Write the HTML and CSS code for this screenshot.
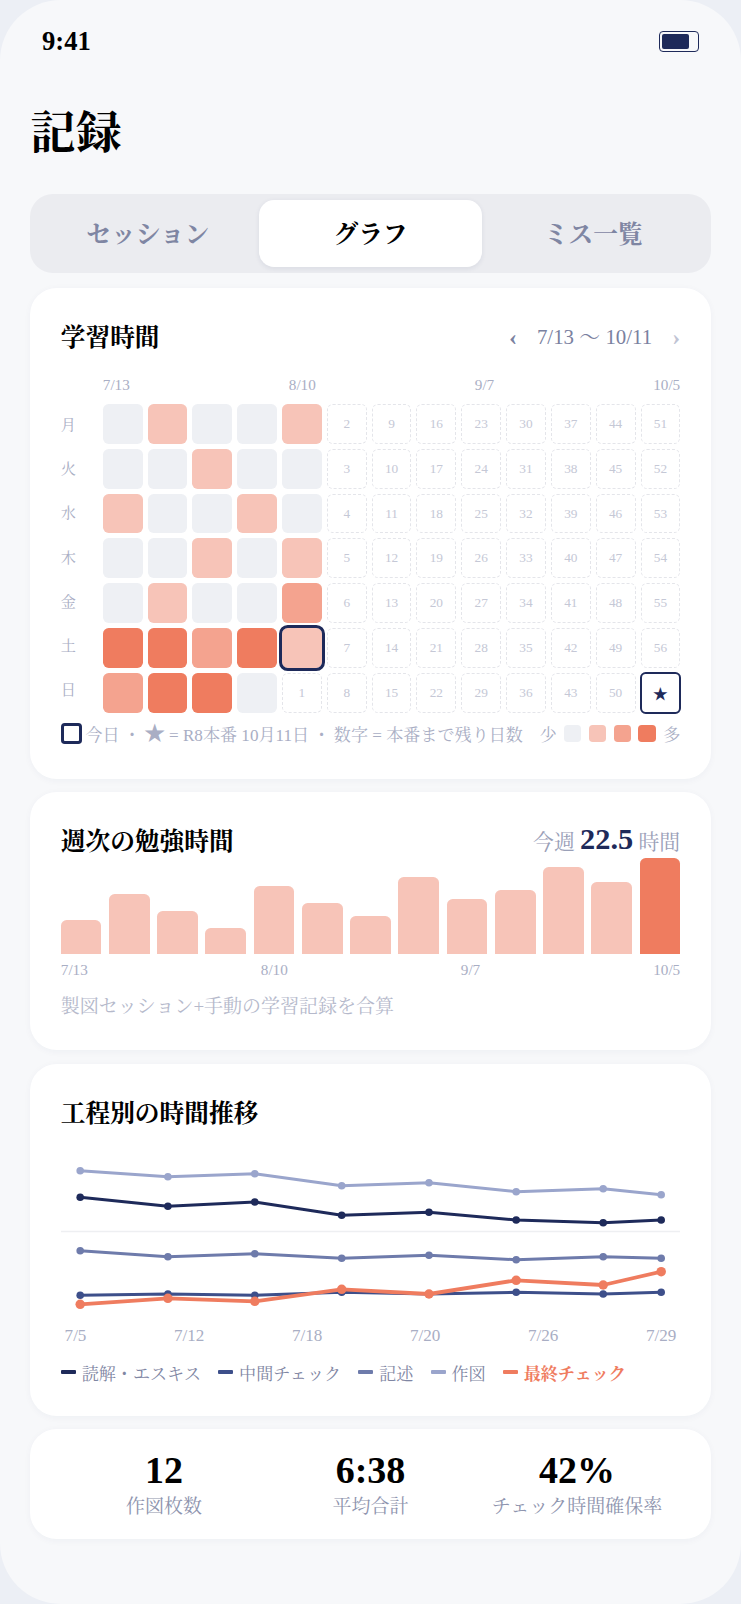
FILE: index.html
```html
<!DOCTYPE html>
<html lang="ja">
<head>
<meta charset="utf-8">
<title>記録</title>
<link rel="stylesheet" href="styles.css">
</head>
<body>
<div class="phone">
  <div class="status">
    <span class="time">9:41</span>
    <span class="battery"><span class="battery-fill"></span></span>
  </div>
  <h1 class="page-title">記録</h1>
  <div class="tabs">
    <div class="tab">セッション</div>
    <div class="tab active">グラフ</div>
    <div class="tab">ミス一覧</div>
  </div>

  <section class="card study">
    <div class="head">
      <h2>学習時間</h2>
      <div class="range"><span class="chev">‹</span><span class="range-text">7/13 〜 10/11</span><span class="chev dim">›</span></div>
    </div>
    <div class="months"><span>7/13</span><span>8/10</span><span>9/7</span><span>10/5</span></div>
    <div class="heat-wrap">
      <div class="days">
        <div class="day">月</div><div class="day">火</div><div class="day">水</div><div class="day">木</div><div class="day">金</div><div class="day">土</div><div class="day">日</div>
      </div>
      <div class="heat">
        <div class="c l0"></div><div class="c l1"></div><div class="c l0"></div><div class="c l0"></div><div class="c l1"></div><div class="c f">2</div><div class="c f">9</div><div class="c f">16</div><div class="c f">23</div><div class="c f">30</div><div class="c f">37</div><div class="c f">44</div><div class="c f">51</div>
        <div class="c l0"></div><div class="c l0"></div><div class="c l1"></div><div class="c l0"></div><div class="c l0"></div><div class="c f">3</div><div class="c f">10</div><div class="c f">17</div><div class="c f">24</div><div class="c f">31</div><div class="c f">38</div><div class="c f">45</div><div class="c f">52</div>
        <div class="c l1"></div><div class="c l0"></div><div class="c l0"></div><div class="c l1"></div><div class="c l0"></div><div class="c f">4</div><div class="c f">11</div><div class="c f">18</div><div class="c f">25</div><div class="c f">32</div><div class="c f">39</div><div class="c f">46</div><div class="c f">53</div>
        <div class="c l0"></div><div class="c l0"></div><div class="c l1"></div><div class="c l0"></div><div class="c l1"></div><div class="c f">5</div><div class="c f">12</div><div class="c f">19</div><div class="c f">26</div><div class="c f">33</div><div class="c f">40</div><div class="c f">47</div><div class="c f">54</div>
        <div class="c l0"></div><div class="c l1"></div><div class="c l0"></div><div class="c l0"></div><div class="c l2"></div><div class="c f">6</div><div class="c f">13</div><div class="c f">20</div><div class="c f">27</div><div class="c f">34</div><div class="c f">41</div><div class="c f">48</div><div class="c f">55</div>
        <div class="c l3"></div><div class="c l3"></div><div class="c l2"></div><div class="c l3"></div><div class="c l1 today"></div><div class="c f">7</div><div class="c f">14</div><div class="c f">21</div><div class="c f">28</div><div class="c f">35</div><div class="c f">42</div><div class="c f">49</div><div class="c f">56</div>
        <div class="c l2"></div><div class="c l3"></div><div class="c l3"></div><div class="c l0"></div><div class="c f">1</div><div class="c f">8</div><div class="c f">15</div><div class="c f">22</div><div class="c f">29</div><div class="c f">36</div><div class="c f">43</div><div class="c f">50</div><div class="c exam">★</div>
      </div>
    </div>
    <div class="key">
      <div class="key-left"><span class="key-today"></span><span>今日</span><span>・</span><span class="key-star">★</span><span>= R8本番 10月11日</span><span>・</span><span>数字 = 本番まで残り日数</span></div>
      <div class="key-right"><span>少</span><span class="sw l0"></span><span class="sw l1"></span><span class="sw l2"></span><span class="sw l3"></span><span>多</span></div>
    </div>
  </section>

  <section class="card weekly">
    <div class="head">
      <h2>週次の勉強時間</h2>
      <div class="week-now">今週 <strong>22.5</strong> 時間</div>
    </div>
    <div class="bars">
      <div class="bar" style="height:34px"></div>
      <div class="bar" style="height:60px"></div>
      <div class="bar" style="height:43px"></div>
      <div class="bar" style="height:26px"></div>
      <div class="bar" style="height:68px"></div>
      <div class="bar" style="height:51px"></div>
      <div class="bar" style="height:38px"></div>
      <div class="bar" style="height:77px"></div>
      <div class="bar" style="height:55px"></div>
      <div class="bar" style="height:64px"></div>
      <div class="bar" style="height:87px"></div>
      <div class="bar" style="height:72px"></div>
      <div class="bar now" style="height:96px"></div>
    </div>
    <div class="bar-labels"><span>7/13</span><span>8/10</span><span>9/7</span><span>10/5</span></div>
    <p class="note">製図セッション+手動の学習記録を合算</p>
  </section>

  <section class="card trend">
    <div class="head"><h2>工程別の時間推移</h2></div>
    <svg class="chart" viewBox="60.8 1130 619.4 190" width="619.4" height="190" aria-hidden="true">
      <line class="grid" x1="60.8" x2="680.2" y1="1231.5" y2="1231.5"/>
      <g class="s s4">
        <polyline points="80,1170.7 167.7,1176.7 254.6,1173.7 341.5,1185.7 428.8,1182.7 516,1191.7 603,1188.7 661,1194.7"/>
        <circle cx="80" cy="1170.7" r="3.8"/><circle cx="167.7" cy="1176.7" r="3.8"/><circle cx="254.6" cy="1173.7" r="3.8"/><circle cx="341.5" cy="1185.7" r="3.8"/><circle cx="428.8" cy="1182.7" r="3.8"/><circle cx="516" cy="1191.7" r="3.8"/><circle cx="603" cy="1188.7" r="3.8"/><circle cx="661" cy="1194.7" r="3.8"/>
      </g>
      <g class="s s1">
        <polyline points="80,1197.3 167.7,1206.3 254.6,1202 341.5,1215.3 428.8,1212.3 516,1220 603,1222.7 661,1220"/>
        <circle cx="80" cy="1197.3" r="3.8"/><circle cx="167.7" cy="1206.3" r="3.8"/><circle cx="254.6" cy="1202" r="3.8"/><circle cx="341.5" cy="1215.3" r="3.8"/><circle cx="428.8" cy="1212.3" r="3.8"/><circle cx="516" cy="1220" r="3.8"/><circle cx="603" cy="1222.7" r="3.8"/><circle cx="661" cy="1220" r="3.8"/>
      </g>
      <g class="s s3">
        <polyline points="80,1250.7 167.7,1256.7 254.6,1253.7 341.5,1258.3 428.8,1255.3 516,1259.7 603,1256.7 661,1258.3"/>
        <circle cx="80" cy="1250.7" r="3.8"/><circle cx="167.7" cy="1256.7" r="3.8"/><circle cx="254.6" cy="1253.7" r="3.8"/><circle cx="341.5" cy="1258.3" r="3.8"/><circle cx="428.8" cy="1255.3" r="3.8"/><circle cx="516" cy="1259.7" r="3.8"/><circle cx="603" cy="1256.7" r="3.8"/><circle cx="661" cy="1258.3" r="3.8"/>
      </g>
      <g class="s s2">
        <polyline points="80,1295.3 167.7,1294 254.6,1295.3 341.5,1292.3 428.8,1294 516,1292.3 603,1294 661,1292.3"/>
        <circle cx="80" cy="1295.3" r="3.8"/><circle cx="167.7" cy="1294" r="3.8"/><circle cx="254.6" cy="1295.3" r="3.8"/><circle cx="341.5" cy="1292.3" r="3.8"/><circle cx="428.8" cy="1294" r="3.8"/><circle cx="516" cy="1292.3" r="3.8"/><circle cx="603" cy="1294" r="3.8"/><circle cx="661" cy="1292.3" r="3.8"/>
      </g>
      <g class="s s5">
        <polyline points="80,1304.3 167.7,1298.3 254.6,1301.3 341.5,1289.3 428.8,1294 516,1280.3 603,1285 661,1271.7"/>
        <circle cx="80" cy="1304.3" r="4.75"/><circle cx="167.7" cy="1298.3" r="4.75"/><circle cx="254.6" cy="1301.3" r="4.75"/><circle cx="341.5" cy="1289.3" r="4.75"/><circle cx="428.8" cy="1294" r="4.75"/><circle cx="516" cy="1280.3" r="4.75"/><circle cx="603" cy="1285" r="4.75"/><circle cx="661" cy="1271.7" r="4.75"/>
      </g>
    </svg>
    <div class="x-labels"><span>7/5</span><span>7/12</span><span>7/18</span><span>7/20</span><span>7/26</span><span>7/29</span></div>
    <div class="legend">
      <div class="item"><span class="mark m1"></span>読解・エスキス</div>
      <div class="item"><span class="mark m2"></span>中間チェック</div>
      <div class="item"><span class="mark m3"></span>記述</div>
      <div class="item"><span class="mark m4"></span>作図</div>
      <div class="item last"><span class="mark m5"></span>最終チェック</div>
    </div>
  </section>

  <section class="card stats">
    <div class="stat"><div class="value">12</div><div class="label">作図枚数</div></div>
    <div class="stat"><div class="value">6:38</div><div class="label">平均合計</div></div>
    <div class="stat"><div class="value">42%</div><div class="label">チェック時間確保率</div></div>
  </section>
</div>
</body>
</html>
```

FILE: styles.css
```css
* { box-sizing: border-box; }
html, body { margin: 0; padding: 0; }
body {
  background: #eceff5;
  font-family: "Liberation Serif", "Noto Serif CJK JP", serif;
  color: #000;
}
.phone {
  width: 741px;
  height: 1604px;
  background: #f7f8fa;
  border-radius: 60.8px;
  overflow: hidden;
  padding: 0 30.4px;
}
.status {
  height: 82px;
  display: flex;
  align-items: center;
  justify-content: space-between;
  padding: 0 11.6px;
}
.time { font-size: 26.6px; font-weight: 700; }
.battery {
  width: 40px;
  height: 21px;
  border: 1px solid #1e2a5a;
  border-radius: 4px;
  padding: 2px;
  display: flex;
}
.battery-fill { width: 27px; background: #1e2a5a; border-radius: 2px; }
.page-title {
  margin: 0 0 12px;
  height: 100px;
  line-height: 104px;
  font-size: 45.6px;
  font-weight: 700;
}
.tabs {
  height: 79px;
  padding: 6px;
  border-radius: 22.8px;
  background: #ebecf0;
  display: grid;
  grid-template-columns: repeat(3, 1fr);
  margin-bottom: 15px;
}
.tab {
  display: flex;
  align-items: center;
  justify-content: center;
  padding-bottom: 2px;
  font-size: 24.7px;
  font-weight: 700;
  color: #7f86a3;
  border-radius: 15.2px;
}
.tab.active {
  background: #fff;
  color: #000;
  box-shadow: 0 1.9px 5.7px rgba(30, 42, 90, 0.08);
}
.card {
  background: #fff;
  border-radius: 26.6px;
  padding: 30.4px 30.4px 0;
  margin-bottom: 13.3px;
  box-shadow: 0 1.9px 7.6px rgba(30, 42, 90, 0.04);
}
.head {
  display: flex;
  align-items: center;
  justify-content: space-between;
  height: 36px;
  padding-bottom: 2px;
}
.head h2 { margin: 0; font-size: 24.7px; font-weight: 700; }
.range { display: flex; align-items: center; color: #7a81a0; font-size: 20.9px; }
.range-text { margin: 0 20px; }
.chev { font-size: 24px; font-weight: 700; line-height: 1; margin-top: 3px; }
.chev.dim { color: #c0c4d4; }
.months {
  display: flex;
  justify-content: space-between;
  margin: 22px 0 9.6px 42px;
  height: 18px;
  line-height: 18px;
  font-size: 15.2px;
  color: #a9aec4;
}
.heat-wrap { display: flex; gap: 5px; }
.days {
  flex: 0 0 37px;
  display: flex;
  flex-direction: column;
  gap: 5px;
}
.day {
  height: 39.2px;
  display: flex;
  align-items: center;
  font-size: 15.2px;
  color: #a9aec4;
}
.heat {
  flex: 1;
  display: grid;
  grid-template-columns: repeat(13, 1fr);
  gap: 5px;
}
.c {
  aspect-ratio: 1;
  border-radius: 5.7px;
  display: flex;
  align-items: center;
  justify-content: center;
  font-size: 13.3px;
}
.l0 { background: #eef0f4; }
.l1 { background: #f7c4b8; }
.l2 { background: #f4a38f; }
.l3 { background: #ef7c5f; }
.f { border: 1px dashed #e4e5ea; color: #c5c8d6; }
.today { outline: 3.2px solid #1e2a5a; outline-offset: -0.6px; }
.exam {
  border: 2.4px solid #1e2a5a;
  color: #1e2a5a;
  font-size: 15.2px;
  margin: -1px;
}
.key {
  display: flex;
  align-items: center;
  justify-content: space-between;
  height: 22px;
  margin-top: 10px;
  font-size: 17.1px;
  color: #a9aec4;
}
.key-left, .key-right { display: flex; align-items: center; }
.key-left { gap: 3.8px; }
.key-right { gap: 7.6px; }
.key-today {
  width: 20.9px;
  height: 20.9px;
  border: 3.8px solid #1e2a5a;
  border-radius: 3.8px;
}
.key-star { flex: 0 0 18.8px; font-size: 20.9px; line-height: 1; text-align: center; }
.sw { width: 17.1px; height: 17.1px; border-radius: 3.8px; }
.study { padding-bottom: 34px; }
.weekly { padding-bottom: 31px; }
.week-now { color: #9aa0b8; font-size: 20.9px; }
.week-now strong { color: #1e2a5a; font-size: 30.4px; }
.bars {
  display: flex;
  align-items: flex-end;
  gap: 7.6px;
  height: 96px;
}
.bar { flex: 1; background: #f7c4b8; border-radius: 5.7px 5.7px 0 0; }
.bar.now { background: #ef7c5f; }
.bar-labels {
  display: flex;
  justify-content: space-between;
  margin-top: 7px;
  height: 18px;
  line-height: 18px;
  font-size: 15.2px;
  color: #a9aec4;
}
.note {
  margin: 16px 0 0;
  height: 24px;
  line-height: 24px;
  font-size: 19px;
  color: #b5b9cb;
}
.trend { padding-bottom: 33px; }
.chart { display: block; }
.grid { stroke: #eeeff2; stroke-width: 1.5; }
.s polyline { fill: none; stroke-width: 3; stroke-linejoin: round; }
.s1 polyline { stroke: #1e2a5a; } .s1 circle { fill: #1e2a5a; }
.s2 polyline { stroke: #3d4f8a; } .s2 circle { fill: #3d4f8a; }
.s3 polyline { stroke: #6e7bab; } .s3 circle { fill: #6e7bab; }
.s4 polyline { stroke: #9aa5cc; } .s4 circle { fill: #9aa5cc; }
.s5 polyline { stroke: #ef7c5f; stroke-width: 3.8; } .s5 circle { fill: #ef7c5f; }
.x-labels {
  display: flex;
  justify-content: space-between;
  padding: 0 3.8px;
  margin-top: 5px;
  height: 22px;
  line-height: 22px;
  font-size: 17.1px;
  color: #a9aec4;
}
.legend {
  display: flex;
  gap: 17.2px;
  margin-top: 14px;
  height: 22px;
  font-size: 17.1px;
  color: #7f86a3;
}
.item { display: flex; align-items: center; gap: 5.7px; }
.item.last { color: #ef7c5f; font-weight: 700; }
.mark { width: 15.2px; height: 4px; border-radius: 1px; }
.m1 { background: #1e2a5a; }
.m2 { background: #3d4f8a; }
.m3 { background: #6e7bab; }
.m4 { background: #9aa5cc; }
.m5 { background: #ef7c5f; }
.stats {
  display: grid;
  grid-template-columns: repeat(3, 1fr);
  padding: 20px 30.4px;
  margin-bottom: 0;
  text-align: center;
}
.value { font-size: 38px; font-weight: 700; line-height: 42px; }
.label { margin-top: 4px; font-size: 19px; line-height: 24px; color: #8e94ae; }
```
